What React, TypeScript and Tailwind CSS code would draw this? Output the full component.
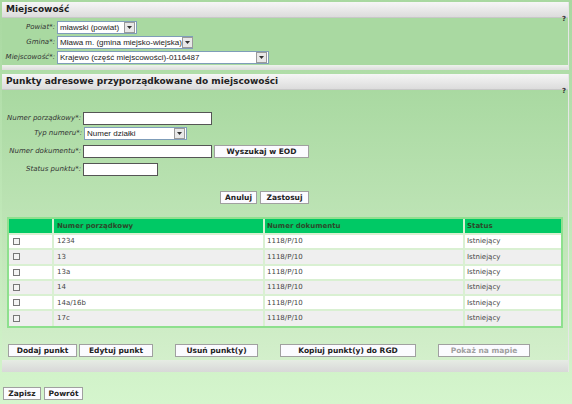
import React from "react";

const font = { fontFamily: '"DejaVu Sans", Verdana, sans-serif' };

function Arrow() {
  return (
    <span className="flex items-center justify-center w-[11px] h-[11px] bg-[#e8e8e8] border border-[#9a9a9a] ml-auto mr-[1px] shrink-0">
      <svg width="5" height="3" viewBox="0 0 5 3">
        <path d="M0 0h5L2.5 3z" fill="#333" />
      </svg>
    </span>
  );
}

function Select({ value, width }: { value: string; width: string }) {
  return (
    <div
      className={`flex items-center h-[13px] bg-white border border-[#7f9db9] ${width}`}
      style={{ fontFamily: '"Liberation Sans", Arial, sans-serif' }}
    >
      <span className="pl-[2px] text-[8px] text-[#222] leading-none whitespace-nowrap">{value}</span>
      <Arrow />
    </div>
  );
}

function Btn({ label, w, disabled, className = "" }: { label: string; w: string; disabled?: boolean; className?: string }) {
  return (
    <button
      className={`block h-[13px] ${w} ${className} bg-[#fbfbff] border border-[#a0a0a0] text-[7.5px] font-bold leading-none whitespace-nowrap ${
        disabled ? "text-[#a0a0a0]" : "text-[#222]"
      }`}
      style={font}
    >
      {label}
    </button>
  );
}

function Header({ title }: { title: string }) {
  return (
    <div className="h-[16px] flex items-center px-[4px] bg-gradient-to-b from-[#f6f6f6] to-[#dcdcdc] border-b border-[#c8c8c8]">
      <span className="text-[9px] font-bold text-[#222] whitespace-nowrap">{title}</span>
    </div>
  );
}

function Label({ text, w }: { text: string; w: string }) {
  return (
    <span className={`${w} shrink-0 text-right italic text-[7px] text-[#333] pr-[2px] whitespace-nowrap`}>{text}</span>
  );
}

function Input({ w }: { w: string }) {
  return <div className={`${w} h-[13px] bg-white border border-[#555] shrink-0`} />;
}

const rows = ["1234", "13", "13a", "14", "14a/16b", "17c"];

export default function App() {
  return (
    <div
      className="w-[572px] h-[404px] overflow-hidden bg-gradient-to-b from-[#a8d8a0] to-[#d5f5cd] pt-[2px] px-[2px]"
      style={font}
    >
      <div className="w-[567px] border-r border-[#e6e6e6]">
        <Header title="Miejscowość" />
        <div className="relative bg-[#a9d9a1] pt-[3px] pb-[1px] flex flex-col gap-[2px]">
          <span className="absolute right-[2px] top-[-4px] text-[7px] font-bold text-[#333]">?</span>
          <div className="flex items-center">
            <Label text="Powiat*:" w="w-[55px]" />
            <Select value="mławski (powiat)" width="w-[80px]" />
          </div>
          <div className="flex items-center">
            <Label text="Gmina*:" w="w-[55px]" />
            <Select value="Mława m. (gmina miejsko-wiejska)" width="w-[136px]" />
          </div>
          <div className="flex items-center">
            <Label text="Miejscowość*:" w="w-[55px]" />
            <Select value="Krajewo (część miejscowości)-0116487" width="w-[212px]" />
          </div>
        </div>
        <div className="h-[5px] bg-gradient-to-b from-[#eef3ec] to-[#dcdcdc]" />
      </div>

      <div className="w-[567px] mt-[4px] border-r border-[#e6e6e6]">
        <Header title="Punkty adresowe przyporządkowane do miejscowości" />
        <div className="relative bg-gradient-to-b from-[#a9d9a1] to-[#d3efcb] pt-[22px] pb-[3px]">
          <span className="absolute right-[2px] top-[-4px] text-[7px] font-bold text-[#333]">?</span>
          <div className="flex flex-col">
            <div className="flex items-center">
              <Label text="Numer porządkowy*:" w="w-[81px]" />
              <Input w="w-[129px]" />
            </div>
            <div className="flex items-center mt-[2px]">
              <Label text="Typ numeru*:" w="w-[82px]" />
              <Select value="Numer działki" width="w-[103px]" />
            </div>
            <div className="flex items-center mt-[5px]">
              <Label text="Numer dokumentu*:" w="w-[81px]" />
              <Input w="w-[129px]" />
              <Btn label="Wyszukaj w EOD" w="w-[95px]" className="ml-[2px]" />
            </div>
            <div className="flex items-center mt-[5px]">
              <Label text="Status punktu*:" w="w-[81px]" />
              <Input w="w-[75px]" />
            </div>
          </div>
          <div className="flex gap-[3px] pl-[218px] mt-[15px]">
            <Btn label="Anuluj" w="w-[37px]" />
            <Btn label="Zastosuj" w="w-[49px]" />
          </div>

          <div className="mx-[5px] mt-[13px] border-2 border-[#8ee08e] bg-[#d9f0d2]">
            <table className="w-full border-collapse text-[7px] text-[#444]">
              <thead>
                <tr className="bg-[#00c965]">
                  <th className="h-[15px] w-[44px] border-r-2 border-[#d9f0d2]" />
                  <th className="w-[211px] text-left pl-[3px] font-bold text-[#2b4a2b] border-r-2 border-[#d9f0d2]">
                    Numer porządkowy
                  </th>
                  <th className="w-[200px] text-left pl-[2px] font-bold text-[#2b4a2b] border-r-2 border-[#d9f0d2]">
                    Numer dokumentu
                  </th>
                  <th className="text-left pl-[2px] font-bold text-[#2b4a2b]">Status</th>
                </tr>
              </thead>
              <tbody>
                {rows.map((r, i) => (
                  <tr key={r} className={`${i % 2 ? "bg-[#efefef]" : "bg-white"} border-t-2 border-[#d9f0d2]`}>
                    <td className="h-[15.3px] p-0 border-r-2 border-[#d9f0d2] pl-[4px]">
                      <span className="block w-[7px] h-[7px] border border-[#777] bg-[#f4f4f4]" />
                    </td>
                    <td className="p-0 pl-[3px] border-r-2 border-[#d9f0d2]">{r}</td>
                    <td className="p-0 pl-[2px] border-r-2 border-[#d9f0d2]">1118/P/10</td>
                    <td className="p-0 pl-[2px]">Istniejący</td>
                  </tr>
                ))}
              </tbody>
            </table>
          </div>

          <div className="flex items-center mt-[16px] pl-[6px]">
            <Btn label="Dodaj punkt" w="w-[69px]" />
            <Btn label="Edytuj punkt" w="w-[74px]" className="ml-[2px]" />
            <Btn label="Usuń punkt(y)" w="w-[83px]" className="ml-[22px]" />
            <Btn label="Kopiuj punkt(y) do RGD" w="w-[136px]" className="ml-[22px]" />
            <Btn label="Pokaż na mapie" w="w-[92px]" className="ml-[22px]" disabled />
          </div>
        </div>
        <div className="h-[12px] bg-gradient-to-b from-[#e6ece4] to-[#d8d8d8]" />
      </div>

      <div className="flex gap-[3px] mt-[15px] pl-[1px]">
        <Btn label="Zapisz" w="w-[38px]" />
        <Btn label="Powrót" w="w-[39px]" />
      </div>
    </div>
  );
}
